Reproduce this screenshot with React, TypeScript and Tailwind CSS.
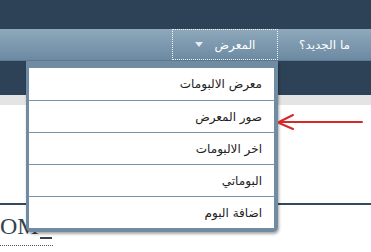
// Forum navbar with the "المعرض" dropdown open
const menuItems = ["معرض الالبومات", "صور المعرض", "اخر الالبومات", "البوماتي", "اضافة البوم"];

export default function App() {
  return (
    <div className="relative w-[371px] h-[252px] overflow-hidden bg-white font-['DejaVu_Sans',sans-serif]">
      {/* Header band */}
      <div className="h-[29px] bg-[#2e4257]" />

      {/* Navbar */}
      <div dir="rtl" className="flex h-[32px] bg-gradient-to-b from-[#8fa8bb] to-[#6b8aa2] border-b border-[#5d7a91]">
        <div className="w-[93px] flex items-center justify-center text-[12px] text-white">ما الجديد؟</div>
        <div className="w-[106px] flex items-center justify-center gap-[12px] border border-dotted border-white/90 text-[12px] text-white">
          <span>المعرض</span>
          <span className="w-0 h-0 border-l-[4px] border-r-[4px] border-t-[5px] border-l-transparent border-r-transparent border-t-[#e6ecf2]" />
        </div>
      </div>

      {/* Sub band */}
      <div className="h-[34px] bg-[#2e4257]" />
      <div className="h-[10px] bg-[#e4e4e4]" />

      {/* Page content */}
      <div className="h-[98px]" />
      <div className="border-t-2 border-[#34495e]">
        <div className="mt-[10px] flex items-end font-['Liberation_Serif',serif] text-[24px] leading-[22px] text-[#37424f]">
          <span>OM</span>
          <span className="ml-[1px] mb-[-2px] w-[12px] h-[2px] bg-[#37424f]" />
        </div>
        <div className="mt-[8px] w-[53px] border-b border-dotted border-[#555]" />
      </div>

      {/* Dropdown */}
      <div className="absolute left-[26px] top-[61px] w-[252px] bg-[#6f8ca3] pt-[7px] pl-[3px] pr-[4px] pb-[4px] rounded-b-[5px] shadow-[1px_2px_3px_rgba(0,0,0,0.35)]">
        <div dir="rtl" className="bg-white">
          {menuItems.map((item, i) => (
            <div
              key={item}
              className={`h-[32px] flex items-center pr-[12px] text-[12px] text-[#222] ${i > 0 ? "border-t border-[#7c93a6]" : ""}`}
            >
              {item}
            </div>
          ))}
        </div>
      </div>

      {/* Red arrow annotation */}
      <svg className="absolute left-[276px] top-[112px]" width="90" height="20" viewBox="0 0 90 20">
        <g stroke="#d42a2a" strokeWidth="2" fill="none" strokeLinecap="round">
          <line x1="3" y1="10" x2="86" y2="10" />
          <line x1="3" y1="10" x2="17" y2="3" />
          <line x1="3" y1="11" x2="17" y2="17" />
        </g>
      </svg>
    </div>
  );
}
